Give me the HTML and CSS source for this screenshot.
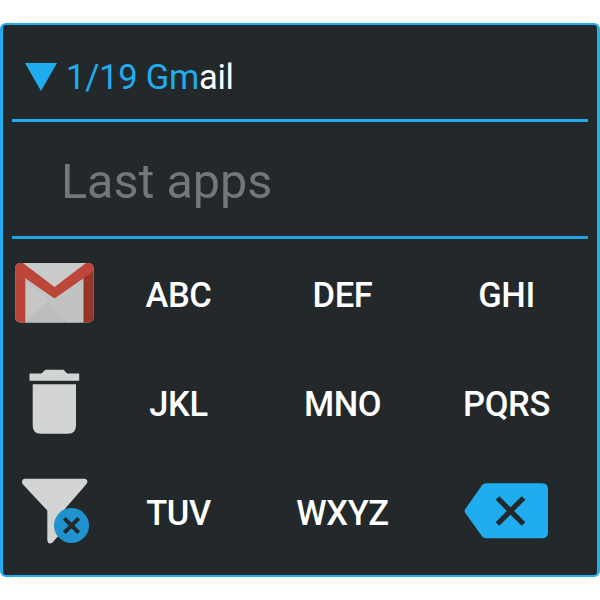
FILE: index.html
```html
<!DOCTYPE html>
<html lang="en">
<head>
<meta charset="utf-8">
<title>App search</title>
<link rel="stylesheet" href="styles.css">
</head>
<body>
<main class="panel">
  <header class="status">
    <svg class="arrow" width="32" height="28" viewBox="0 0 32 28"><path d="M0 0H32L16 28Z" fill="#20adf0"/></svg>
    <div class="match"><span class="hit">1/19 Gm</span>ail</div>
  </header>
  <section class="recent">Last apps</section>
  <section class="keys">
    <div class="key">
      <svg width="84" height="67" viewBox="12 260 84 67">
        <defs><clipPath id="mail"><rect x="15.2" y="263" width="78.4" height="59.5" rx="5"/></clipPath></defs>
        <g clip-path="url(#mail)">
          <path d="M15 263H94V323H15Z" fill="#c9cbca"/>
          <path d="M25 278L54.5 298L70 323H25Z" fill="#bcbebd"/>
          <path d="M25 278L68 323H84V278L54.5 298Z" fill="#c1c3c2"/>
          <path d="M25 323V321L49 300L54.5 304L25 281Z" fill="#c5c7c6"/>
          <path d="M15 263H22L25.3 276V323H15Z" fill="#bb443a"/>
          <path d="M83.5 276L94 270V323H83.5Z" fill="#97352a"/>
          <path d="M15 263H23L54.5 287L86 263H94V271L54.5 298.5L15 271Z" fill="#bd463b"/>
        </g>
      </svg>
    </div>
    <div class="key letters">ABC</div><div class="key letters">DEF</div><div class="key letters">GHI</div>
    <div class="key">
      <svg width="84" height="78" viewBox="12 364 84 78">
        <path d="M29.5 373.5H41.5L45.3 369.8H63.5L67.2 373.5H79.2V380.8H29.5Z M32.7 384.3H76V425.5Q76 433.8 67.7 433.8H41Q32.7 433.8 32.7 425.5Z" fill="#d3d5d4"/>
      </svg>
    </div>
    <div class="key letters">JKL</div><div class="key letters">MNO</div><div class="key letters">PQRS</div>
    <div class="key">
      <svg width="84" height="78" viewBox="12 473 84 78">
        <path d="M24 478.7H85Q89 480 86.5 484L63.5 510.5V530L52.5 542.5Q48 545 47.3 540.5V510.5L22.5 484Q21 480 24 478.7Z" fill="#d3d5d4"/>
        <circle cx="71.5" cy="525.5" r="17.5" fill="#2093ce"/>
        <path d="M64.3 518.3L78.7 532.7M78.7 518.3L64.3 532.7" stroke="#23282b" stroke-width="4"/>
      </svg>
    </div>
    <div class="key letters">TUV</div><div class="key letters">WXYZ</div>
    <div class="key">
      <svg width="164" height="78" viewBox="424 473 164 78">
        <path d="M486 483.2H542Q548 483.2 548 489.2V532.3Q548 538.3 542 538.3H486Q483.5 538.3 482 536.3L465.3 513Q464 511 465.3 509L482 485.2Q483.5 483.2 486 483.2Z" fill="#20adf0"/>
        <path d="M497.5 498L523.5 524M523.5 498L497.5 524" stroke="#23282b" stroke-width="5.2"/>
      </svg>
    </div>
  </section>
</main>
</body>
</html>
```
FILE: styles.css
```css
body {
  margin: 0;
  background: #fff;
  font-family: Roboto, sans-serif;
  color: #fff;
}

.panel {
  box-sizing: border-box;
  width: 600px;
  height: 554px;
  margin-top: 23px;
  padding: 0 9px;
  border: 3px solid #20adf0;
  border-top-width: 2px;
  border-bottom-width: 2px;
  border-radius: 6px;
  background: #23282b;
}

.status {
  display: flex;
  align-items: center;
  height: 94px;
  padding: 0 13px;
  border-bottom: 3px solid #20adf0;
}

.arrow {
  display: block;
  margin: 10px 9px 0 0;
}

.match {
  margin-top: 10px;
  font-size: 34.5px;
  line-height: 40px;
  letter-spacing: -0.25px;
}

.hit {
  color: #20adf0;
}

.recent {
  box-sizing: border-box;
  height: 117px;
  padding: 31px 0 0 49px;
  border-bottom: 3px solid #20a3e3;
  font-size: 48.5px;
  line-height: 58px;
  color: #747678;
}

.keys {
  display: grid;
  grid-template-columns: 84px repeat(3, 164px);
  grid-template-rows: repeat(3, 109px);
}

.key {
  display: flex;
  align-items: center;
  justify-content: center;
}

.key svg {
  display: block;
}

.letters {
  padding: 2px 0 0 1px;
  font-size: 34.5px;
  font-weight: 500;
  letter-spacing: -0.4px;
}
```
